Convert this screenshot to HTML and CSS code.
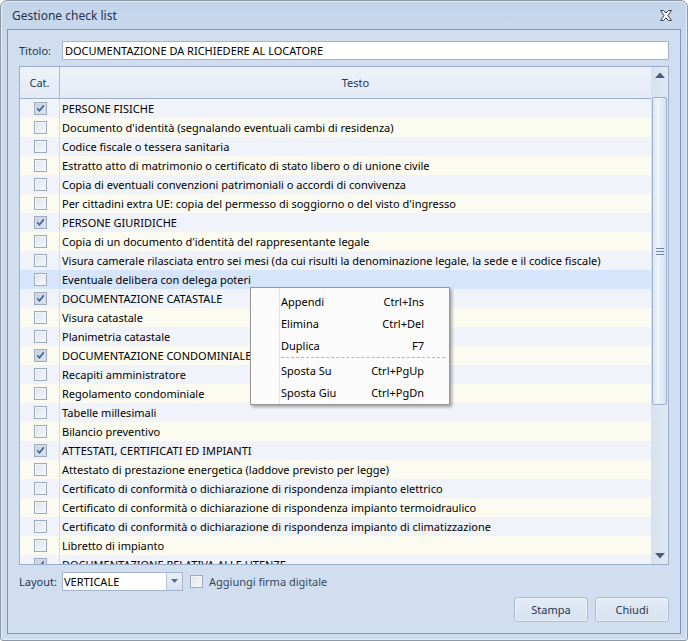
FILE: index.html
```html
<!DOCTYPE html>
<html>
<head>
<meta charset="utf-8">
<link rel="stylesheet" href="styles.css">
</head>
<body>
<div class="window">
  <div class="titlebar">
    <span class="title">Gestione check list</span>
    <svg class="close" width="12" height="11" viewBox="0 0 12 11"><path d="M0.5 0.5 H3.5 L6 3 L8.5 0.5 H11.5 L8 5.5 L11.5 10.5 H8.5 L6 8 L3.5 10.5 H0.5 L4 5.5 Z" fill="#f4f6f9" stroke="#3a4658" stroke-width="1"/></svg>
  </div>
  <div class="panel">
    <div class="title-row">
      <span class="lbl">Titolo:</span>
      <div class="input">DOCUMENTAZIONE DA RICHIEDERE AL LOCATORE</div>
    </div>
    <div class="grid">
      <div class="grid-main">
        <div class="grid-head">
          <div class="c-cat">Cat.</div>
          <div class="c-text">Testo</div>
        </div>
        <div class="grid-body">
          <div class="row"><div class="c-cat"><span class="cb on"><svg width="11" height="11" viewBox="0 0 11 11"><path d="M2.3 5.4 L4.5 7.8 L8.8 2.4" fill="none" stroke="#3f679f" stroke-width="1.7"/></svg></span></div><div class="c-text">PERSONE FISICHE</div></div>
          <div class="row"><div class="c-cat"><span class="cb"></span></div><div class="c-text">Documento d'identità (segnalando eventuali cambi di residenza)</div></div>
          <div class="row"><div class="c-cat"><span class="cb"></span></div><div class="c-text">Codice fiscale o tessera sanitaria</div></div>
          <div class="row"><div class="c-cat"><span class="cb"></span></div><div class="c-text">Estratto atto di matrimonio o certificato di stato libero o di unione civile</div></div>
          <div class="row"><div class="c-cat"><span class="cb"></span></div><div class="c-text">Copia di eventuali convenzioni patrimoniali o accordi di convivenza</div></div>
          <div class="row"><div class="c-cat"><span class="cb"></span></div><div class="c-text">Per cittadini extra UE: copia del permesso di soggiorno o del visto d'ingresso</div></div>
          <div class="row"><div class="c-cat"><span class="cb on"><svg width="11" height="11" viewBox="0 0 11 11"><path d="M2.3 5.4 L4.5 7.8 L8.8 2.4" fill="none" stroke="#3f679f" stroke-width="1.7"/></svg></span></div><div class="c-text">PERSONE GIURIDICHE</div></div>
          <div class="row"><div class="c-cat"><span class="cb"></span></div><div class="c-text">Copia di un documento d'identità del rappresentante legale</div></div>
          <div class="row"><div class="c-cat"><span class="cb"></span></div><div class="c-text">Visura camerale rilasciata entro sei mesi (da cui risulti la denominazione legale, la sede e il codice fiscale)</div></div>
          <div class="row sel"><div class="c-cat"><span class="cb"></span></div><div class="c-text">Eventuale delibera con delega poteri</div></div>
          <div class="row"><div class="c-cat"><span class="cb on"><svg width="11" height="11" viewBox="0 0 11 11"><path d="M2.3 5.4 L4.5 7.8 L8.8 2.4" fill="none" stroke="#3f679f" stroke-width="1.7"/></svg></span></div><div class="c-text">DOCUMENTAZIONE CATASTALE</div></div>
          <div class="row"><div class="c-cat"><span class="cb"></span></div><div class="c-text">Visura catastale</div></div>
          <div class="row"><div class="c-cat"><span class="cb"></span></div><div class="c-text">Planimetria catastale</div></div>
          <div class="row"><div class="c-cat"><span class="cb on"><svg width="11" height="11" viewBox="0 0 11 11"><path d="M2.3 5.4 L4.5 7.8 L8.8 2.4" fill="none" stroke="#3f679f" stroke-width="1.7"/></svg></span></div><div class="c-text">DOCUMENTAZIONE CONDOMINIALE</div></div>
          <div class="row"><div class="c-cat"><span class="cb"></span></div><div class="c-text">Recapiti amministratore</div></div>
          <div class="row"><div class="c-cat"><span class="cb"></span></div><div class="c-text">Regolamento condominiale</div></div>
          <div class="row"><div class="c-cat"><span class="cb"></span></div><div class="c-text">Tabelle millesimali</div></div>
          <div class="row"><div class="c-cat"><span class="cb"></span></div><div class="c-text">Bilancio preventivo</div></div>
          <div class="row"><div class="c-cat"><span class="cb on"><svg width="11" height="11" viewBox="0 0 11 11"><path d="M2.3 5.4 L4.5 7.8 L8.8 2.4" fill="none" stroke="#3f679f" stroke-width="1.7"/></svg></span></div><div class="c-text">ATTESTATI, CERTIFICATI ED IMPIANTI</div></div>
          <div class="row"><div class="c-cat"><span class="cb"></span></div><div class="c-text">Attestato di prestazione energetica (laddove previsto per legge)</div></div>
          <div class="row"><div class="c-cat"><span class="cb"></span></div><div class="c-text">Certificato di conformità o dichiarazione di rispondenza impianto elettrico</div></div>
          <div class="row"><div class="c-cat"><span class="cb"></span></div><div class="c-text">Certificato di conformità o dichiarazione di rispondenza impianto termoidraulico</div></div>
          <div class="row"><div class="c-cat"><span class="cb"></span></div><div class="c-text">Certificato di conformità o dichiarazione di rispondenza impianto di climatizzazione</div></div>
          <div class="row"><div class="c-cat"><span class="cb"></span></div><div class="c-text">Libretto di impianto</div></div>
          <div class="row"><div class="c-cat"><span class="cb on"><svg width="11" height="11" viewBox="0 0 11 11"><path d="M2.3 5.4 L4.5 7.8 L8.8 2.4" fill="none" stroke="#3f679f" stroke-width="1.7"/></svg></span></div><div class="c-text">DOCUMENTAZIONE RELATIVA ALLE UTENZE</div></div>
        </div>
      </div>
      <div class="vscroll">
        <div class="sb-btn"><svg width="10" height="6" viewBox="0 0 10 6"><path d="M0 6 L5 0.5 L10 6 Z" fill="#4b5b7c"/></svg></div>
        <div class="sb-track">
          <div class="thumb">
            <svg width="8" height="7" viewBox="0 0 8 7"><path d="M0 0.5 H8 M0 3.5 H8 M0 6.5 H8" stroke="#6f86b0" stroke-width="1"/></svg>
          </div>
        </div>
        <div class="sb-btn"><svg width="10" height="6" viewBox="0 0 10 6"><path d="M0 0 L5 5.5 L10 0 Z" fill="#4b5b7c"/></svg></div>
      </div>
      <div class="ctxmenu">
        <div class="mi"><span>Appendi</span><span>Ctrl+Ins</span></div>
        <div class="mi"><span>Elimina</span><span>Ctrl+Del</span></div>
        <div class="mi"><span>Duplica</span><span>F7</span></div>
        <div class="msep"></div>
        <div class="mi"><span>Sposta Su</span><span>Ctrl+PgUp</span></div>
        <div class="mi"><span>Sposta Giu</span><span>Ctrl+PgDn</span></div>
      </div>
    </div>
    <div class="bottom-row">
      <span class="lbl">Layout:</span>
      <div class="combo">
        <span class="combo-val">VERTICALE</span>
        <span class="combo-btn"><svg width="7" height="4" viewBox="0 0 7 4"><path d="M0 0 H7 L3.5 4 Z" fill="#5a6a85"/></svg></span>
      </div>
      <span class="cb dis"></span>
      <span class="cb-lbl">Aggiungi firma digitale</span>
    </div>
    <div class="buttons">
      <div class="btn">Stampa</div>
      <div class="btn">Chiudi</div>
    </div>
  </div>
</div>
</body>
</html>
```
FILE: styles.css
```css
* { box-sizing: border-box; }
html, body { margin: 0; padding: 0; }
body {
  width: 688px;
  height: 641px;
  background: #ffffff;
  font-family: "Noto Sans", "Open Sans", sans-serif;
  font-size: 11px;
  overflow: hidden;
}
.window {
  width: 688px;
  height: 641px;
  border: 1px solid #8d98a6;
  border-radius: 7px 7px 3px 3px;
  background: linear-gradient(#c3d4ea, #cddbee 60px, #cddbee);
  box-shadow: inset 0 0 0 1px #e4ecf6;
  display: flex;
  flex-direction: column;
  overflow: hidden;
}
.titlebar {
  height: 28px;
  flex: none;
  display: flex;
  align-items: center;
  justify-content: space-between;
  padding: 0 15px 0 11px;
}
.title {
  color: #1f3350;
  font-size: 12px;
}
.close { margin-top: 1px; }
.panel {
  margin-left: 6px;
  width: 674px;
  height: 605px;
  border: 1px solid #7e98bd;
  background: #d1deef;
  padding: 11px 11px 11px 11px;
  display: flex;
  flex-direction: column;
}
.lbl {
  color: #1e3654;
  font-size: 11px;
}
.title-row {
  display: flex;
  align-items: center;
  height: 19px;
}
.title-row .lbl { width: 43px; }
.input {
  flex: 1;
  height: 19px;
  background: #fff;
  border: 1px solid #a5b5cc;
  padding: 0 2px;
  line-height: 17px;
  color: #000;
  white-space: nowrap;
}
.grid {
  position: relative;
  margin-top: 6px;
  height: 499px;
  border: 1px solid #9aaecb;
  display: flex;
  background: #f0f4fa;
}
.grid-main {
  flex: 1;
  overflow: hidden;
  display: flex;
  flex-direction: column;
}
.grid-head {
  height: 32px;
  flex: none;
  display: flex;
  background: linear-gradient(#eef3fa, #e3eaf5);
  border-bottom: 1px solid #9fb1cc;
}
.grid-head .c-cat {
  width: 40px;
  border-right: 1px solid #a8b9d2;
  display: flex;
  align-items: center;
  justify-content: center;
  color: #1e3654;
}
.grid-head .c-text {
  flex: 1;
  display: flex;
  align-items: center;
  justify-content: center;
  color: #1e3654;
}
.grid-body { flex: 1; overflow: hidden; }
.row {
  height: 19px;
  display: flex;
  align-items: center;
  background: #f0f4fa;
}
.row:nth-child(even) { background: #fbfbf1; }
.row.sel { background: #d6e5fb; }
.row .c-cat {
  width: 40px;
  height: 19px;
  border-right: 1px solid #d3dced;
  display: flex;
  align-items: center;
  justify-content: center;
}
.row .c-text {
  flex: 1;
  padding-left: 2px;
  white-space: nowrap;
  color: #000;
}
.cb {
  width: 13px;
  height: 13px;
  border: 1px solid #9eabbd;
  background: linear-gradient(135deg, #dfe4ea, #f6f7f9);
  box-shadow: inset 0 0 0 1px #f3f5f8;
  display: inline-flex;
  align-items: center;
  justify-content: center;
  margin-left: 1px;
}
.cb.on {
  background: linear-gradient(135deg, #c5ceda, #e3e8ef);
  box-shadow: inset 0 0 0 1px #d5dce6;
}
.vscroll {
  width: 17px;
  flex: none;
  display: flex;
  flex-direction: column;
  background: linear-gradient(90deg, #d6e1f0, #e1e9f5);
}
.sb-btn {
  height: 16px;
  flex: none;
  display: flex;
  align-items: center;
  justify-content: center;
}
.sb-track {
  flex: 1;
  display: flex;
  flex-direction: column;
  padding-top: 14px;
}
.thumb {
  margin: 0 1px;
  height: 308px;
  border: 1px solid #9bb0d1;
  border-radius: 2px;
  background: linear-gradient(90deg, #dde6f3, #eef3fa 40%, #d5e0f0);
  display: flex;
  align-items: center;
  justify-content: center;
}
.ctxmenu {
  position: absolute;
  left: 230px;
  top: 220px;
  width: 200px;
  border: 1px solid #979797;
  background: #fbfbfb;
  box-shadow: 2px 2px 3px rgba(0,0,0,0.35);
  padding: 2px 2px 1px 28px;
  background-image: linear-gradient(90deg, transparent 28px, #e2e3e3 28px, #e2e3e3 29px, transparent 29px);
}
.mi {
  height: 22px;
  display: flex;
  align-items: center;
  justify-content: space-between;
  padding: 0 23px 0 2px;
  color: #000;
  font-size: 11px;
}
.msep {
  height: 2px;
  margin: 1px 2px 0 2px;
  border-top: 1px dashed #b5b5b5;
}
.bottom-row {
  display: flex;
  align-items: center;
  margin-top: 6px;
  height: 20px;
}
.bottom-row .lbl { width: 43px; }
.combo {
  width: 121px;
  height: 19px;
  border: 1px solid #a5b5cc;
  background: #fff;
  display: flex;
}
.combo-val {
  flex: 1;
  padding-left: 1px;
  line-height: 17px;
  color: #000;
}
.combo-btn {
  width: 16px;
  border-left: 1px solid #b6c4d8;
  background: linear-gradient(#e9eff8, #d8e2f0);
  display: flex;
  align-items: center;
  justify-content: center;
}
.cb.dis { margin-left: 7px; }
.cb-lbl {
  margin-left: 6px;
  color: #36475e;
}
.buttons {
  display: flex;
  justify-content: flex-end;
  gap: 7px;
  margin-top: 6px;
}
.btn {
  width: 74px;
  height: 25px;
  border: 1px solid #a9bad2;
  border-radius: 3px;
  background: linear-gradient(#e3ebf6, #d6e1f0);
  box-shadow: inset 0 0 0 1px #eef3f9;
  display: flex;
  align-items: center;
  justify-content: center;
  color: #1e3654;
}
```
